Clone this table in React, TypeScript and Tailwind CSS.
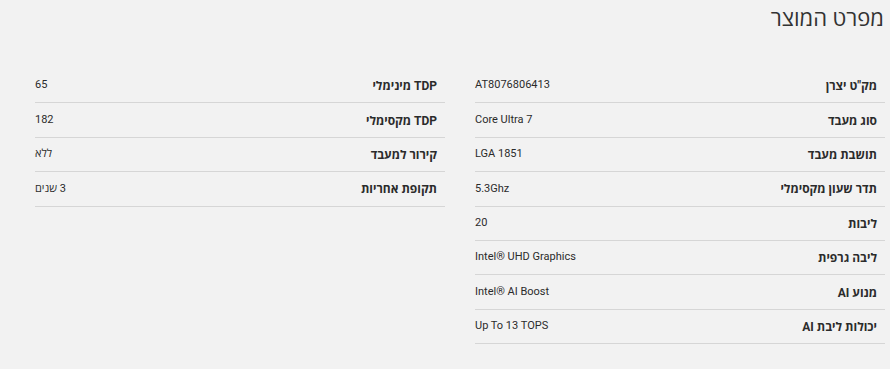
const rightSpecs = [
  { label: 'מק"ט יצרן', value: 'AT8076806413' },
  { label: 'סוג מעבד', value: 'Core Ultra 7' },
  { label: 'תושבת מעבד', value: 'LGA 1851' },
  { label: 'תדר שעון מקסימלי', value: '5.3Ghz' },
  { label: 'ליבות', value: '20' },
  { label: 'ליבה גרפית', value: 'Intel® UHD Graphics' },
  { label: 'מנוע AI', value: 'Intel® AI Boost' },
  { label: 'יכולות ליבת AI', value: 'Up To 13 TOPS' },
]

const leftSpecs = [
  { label: 'TDP מינימלי', value: '65' },
  { label: 'TDP מקסימלי', value: '182' },
  { label: 'קירור למעבד', value: 'ללא' },
  { label: 'תקופת אחריות', value: '3 שנים' },
]

function SpecTable({ rows }: { rows: { label: string; value: string }[] }) {
  return (
    <div className="w-[410px] flex flex-col">
      {rows.map((r) => (
        <div
          key={r.label}
          className="h-[34.4px] flex items-center justify-between border-b border-[#d6d6d6]"
        >
          <span className="pr-2 pt-[1px] text-[12px] font-bold text-[#2b2b2b]">{r.label}</span>
          <span dir="auto" className="text-[11px] text-[#2b2b2b]">{r.value}</span>
        </div>
      ))}
    </div>
  )
}

export default function App() {
  return (
    <div
      dir="rtl"
      className="h-[369px] bg-[#f2f2f2] pr-[5px] pl-[35px]"
      style={{ fontFamily: 'Roboto, "Open Sans", "DejaVu Sans", sans-serif' }}
    >
      <h2 className="pt-[4px] pr-[1px] text-[22px] font-normal text-[#333] leading-[30px]">מפרט המוצר</h2>
      <div className="mt-[35px] flex items-start gap-[30px]">
        <SpecTable rows={rightSpecs} />
        <SpecTable rows={leftSpecs} />
      </div>
    </div>
  )
}
